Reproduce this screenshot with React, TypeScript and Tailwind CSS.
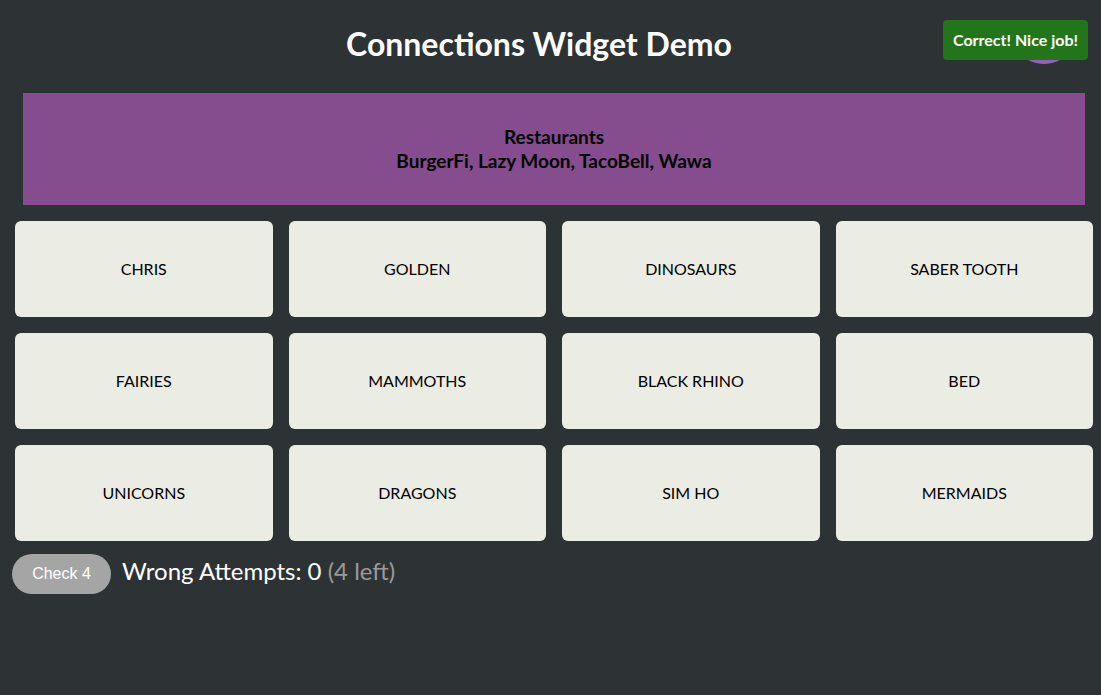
import React from "react"

const words = [
  "CHRIS", "GOLDEN", "DINOSAURS", "SABER TOOTH",
  "FAIRIES", "MAMMOTHS", "BLACK RHINO", "BED",
  "UNICORNS", "DRAGONS", "SIM HO", "MERMAIDS",
]

export default function App() {
  return (
    <div
      className="relative min-h-[695px] w-full overflow-hidden bg-[#2d3235] text-white"
      style={{ fontFamily: "Lato, 'Noto Sans', sans-serif" }}
    >
      {/* purple help button behind toast */}
      <div className="absolute left-[1016px] top-[20px] h-[44px] w-[56px] rounded-[50%] bg-[#9a5cc0]" />
      {/* toast */}
      <div className="absolute left-[943px] top-[20px] flex h-[40px] w-[145px] items-center justify-center rounded-[4px] bg-[#23751a] text-[16px] font-bold text-white">
        Correct! Nice job!
      </div>

      <h1 className="pr-[23px] pt-[24px] text-center text-[32px] font-bold leading-[40px]">
        Connections Widget Demo
      </h1>

      <div className="pl-[15px] pr-[8px] pt-[29px]">
        <div className="mx-[8px] flex h-[112px] flex-col items-center justify-center bg-[#854c8e] text-[19px] font-bold leading-[24px] text-black">
          <div>Restaurants</div>
          <div>BurgerFi, Lazy Moon, TacoBell, Wawa</div>
        </div>

        <div className="mt-[16px] grid grid-cols-4 gap-[16px]">
          {words.map((w) => (
            <div
              key={w}
              className="flex h-[96px] items-center justify-center rounded-[6px] bg-[#ebece3] text-[16px] text-black"
            >
              {w}
            </div>
          ))}
        </div>
      </div>

      <div className="mt-[13px] flex items-center pl-[12px]">
        <button
          className="h-[40px] w-[99px] rounded-full bg-[#a5a5a5] text-[16px] font-medium text-white"
          style={{ fontFamily: "'Liberation Sans', Arial, sans-serif" }}
        >
          Check 4
        </button>
        <div className="ml-[11px] -mt-[6px] text-[24px] leading-[30px]">
          Wrong Attempts: 0 <span className="text-[#9a9a9a]">(4 left)</span>
        </div>
      </div>
    </div>
  )
}
